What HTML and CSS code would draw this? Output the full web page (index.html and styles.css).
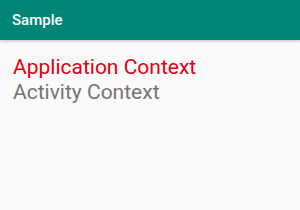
FILE: index.html
```html
<!DOCTYPE html>
<html lang="en">
  <head>
    <meta charset="UTF-8" />
    <meta name="viewport" content="width=device-width, initial-scale=1.0" />
    <title>Sample</title>
    <link rel="stylesheet" href="styles.css">
  </head>
  <body>
    <div class="toolbar">Sample</div>
    <div class="content">
      <div class="app-ctx">Application Context</div>
      <div class="act-ctx">Activity Context</div>
    </div>
  </body>
</html>
```

FILE: styles.css
```css
body {
  margin: 0;
  background-color: #fafafa;
  font-family: Roboto, "Noto Sans", sans-serif;
}
.toolbar {
  height: 40px;
  background-color: #008577;
  color: white;
  font-size: 15px;
  font-weight: 500;
  padding-left: 12px;
  display: flex;
  align-items: center;
  box-shadow: 0 1px 3px rgba(0, 0, 0, 0.25);
}
.content {
  padding: 15px 13px;
  font-size: 21px;
  line-height: 25px;
}
.app-ctx {
  color: #e0000f;
}
.act-ctx {
  color: #757575;
}
```
